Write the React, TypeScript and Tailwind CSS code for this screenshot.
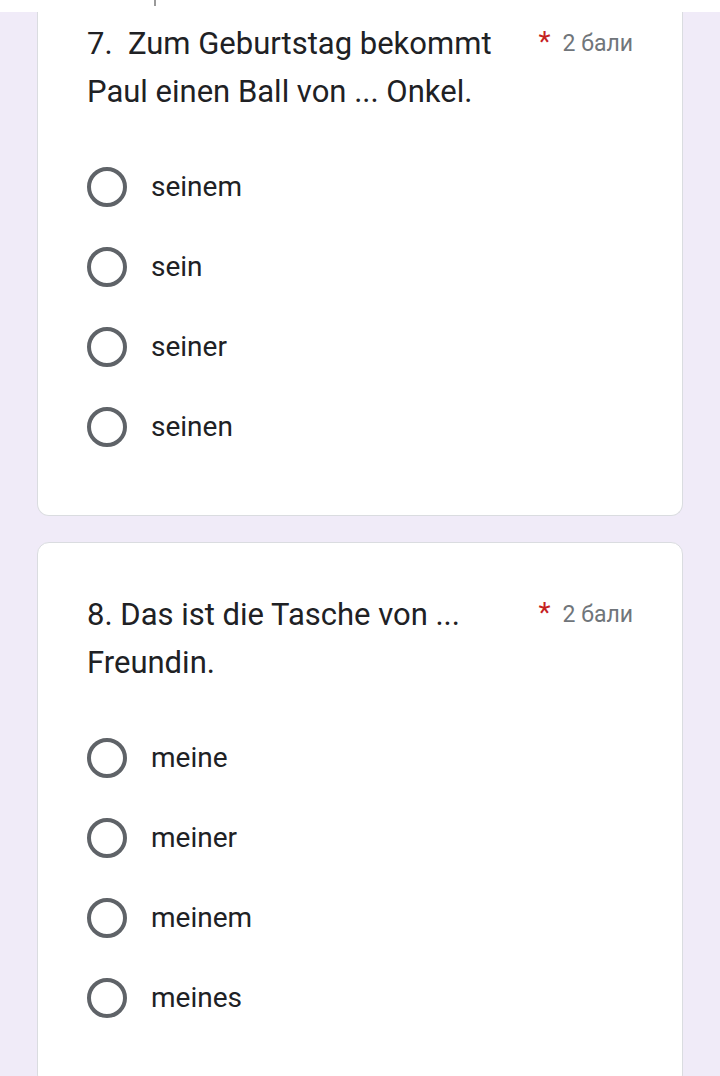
import * as React from "react"

interface Question {
  title: string
  points: string
  options: string[]
}

const questions: Question[] = [
  {
    title: "7.\u00a0 Zum Geburtstag bekommt Paul einen Ball von ... Onkel.",
    points: "2 бали",
    options: ["seinem", "sein", "seiner", "seinen"],
  },
  {
    title: "8. Das ist die Tasche von ... Freundin.",
    points: "2 бали",
    options: ["meine", "meiner", "meinem", "meines"],
  },
]

function Radio() {
  return <span className="block h-[40px] w-[40px] shrink-0 rounded-full border-[4px] border-[#5f6368]" />
}

function QuestionCard({ q, first }: { q: Question; first?: boolean }) {
  return (
    <div
      className={`bg-white border border-[#dadce0] pl-[49px] pr-[49px] ${
        first ? "rounded-b-[12px] border-t-0 pt-[8px] pb-[48px]" : "rounded-[12px] pt-[48px] pb-[48px]"
      }`}
    >
      <div className="flex items-start justify-between">
        <p className="w-[430px] text-[31px] leading-[48px] text-[#202124]">{q.title}</p>
        <div className="flex items-center gap-[12px] leading-[48px]">
          <span className="text-[28px] text-[#c5221f] -mt-[4px]">*</span>
          <span className="text-[23px] text-[#70757a]">{q.points}</span>
        </div>
      </div>

      <div className="mt-[31px] flex flex-col">
        {q.options.map((opt) => (
          <label key={opt} className="flex h-[80px] items-center gap-[24px]">
            <Radio />
            <span className="text-[28px] text-[#202124]">{opt}</span>
          </label>
        ))}
      </div>
    </div>
  )
}

export default function App() {
  return (
    <div
      className="h-[1076px] overflow-hidden bg-[#f0ebf8]"
      style={{ fontFamily: "Roboto, 'Noto Sans', sans-serif" }}
    >
      {/* top bar cut off by the scroll */}
      <div className="relative h-[12px] bg-white">
        <span className="absolute left-[154px] top-0 h-[6px] w-[2px] bg-[#9a9a9a]" />
      </div>

      <div className="flex flex-col gap-[26px] px-[37px]">
        <QuestionCard q={questions[0]} first />
        <QuestionCard q={questions[1]} />
      </div>
    </div>
  )
}
